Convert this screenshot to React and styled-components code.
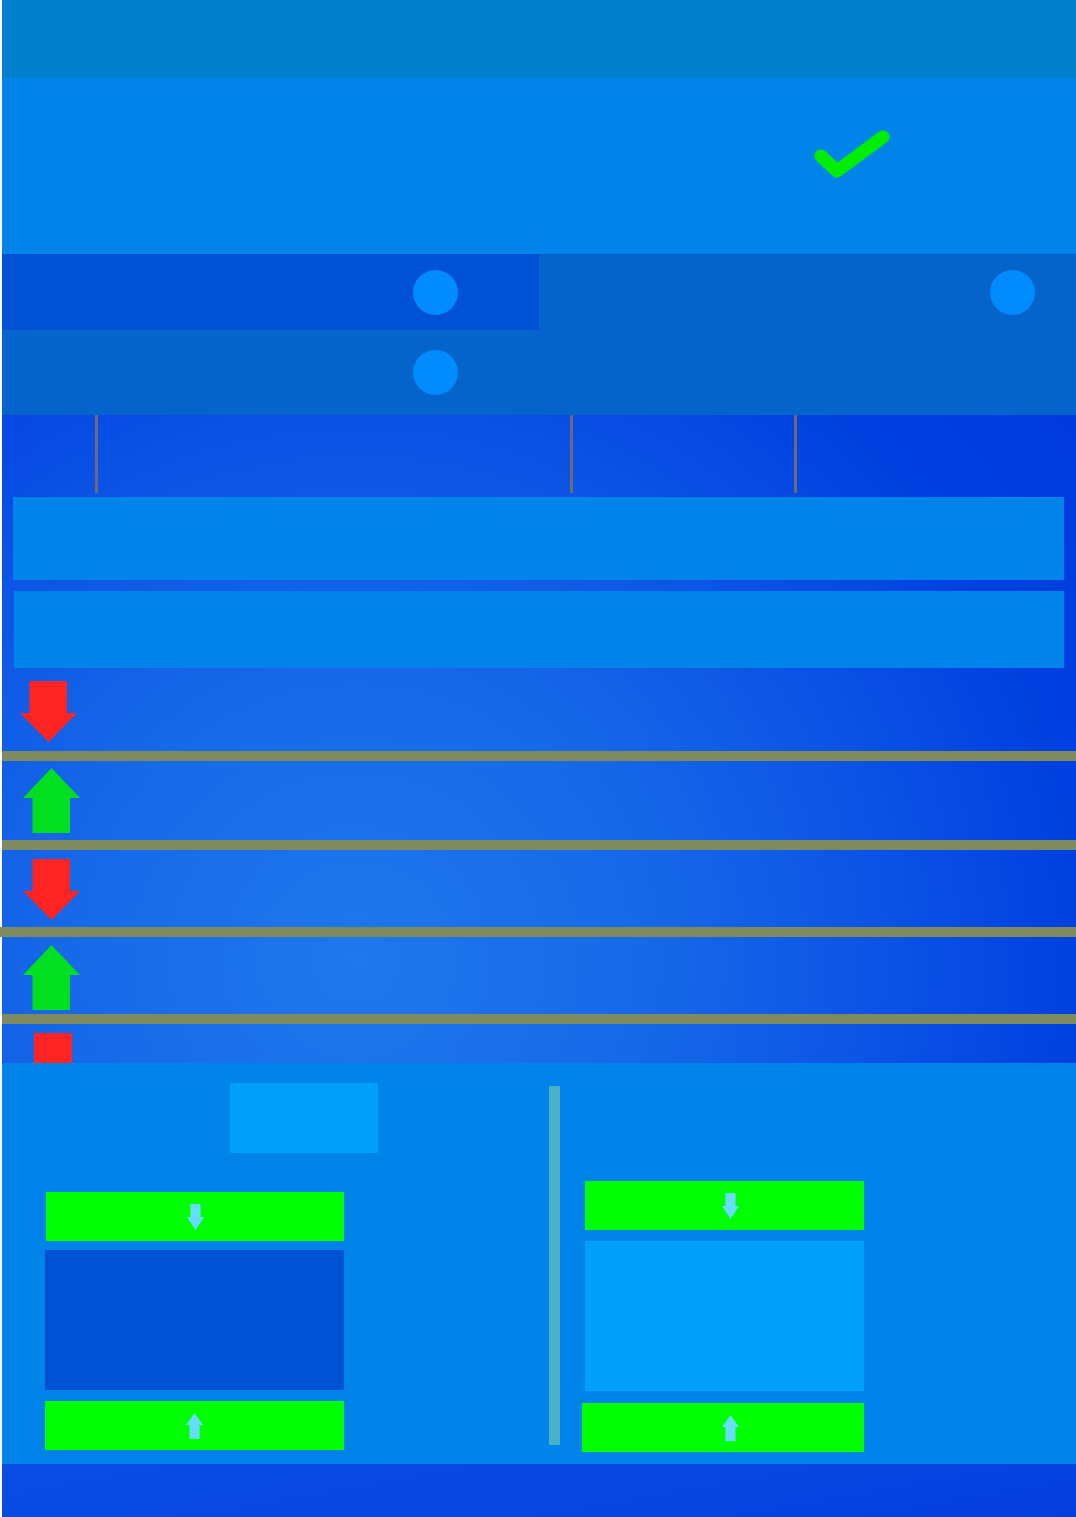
import React from 'react'
import styled, { createGlobalStyle } from 'styled-components'

const GlobalStyle = createGlobalStyle`
  html, body {
    margin: 0;
    padding: 0;
    background: #ffffff;
    font-family: 'Liberation Sans', Arial, sans-serif;
  }
`

const Page = styled.div`
  padding-left: 2px;
  display: flex;
  flex-direction: column;
`

const Header = styled.header`
  height: 78px;
  background: #0080cc;
`

const Hero = styled.section`
  height: 176px;
  background: #0084ea;
  display: flex;
  align-items: flex-start;
  padding-left: 809px;
  padding-top: 51px;
  box-sizing: border-box;
`

const Toggles = styled.section`
  display: grid;
  grid-template-columns: 537px 1fr;
  grid-template-rows: 76px 85px;
  background: #0563cc;
`

const ToggleCell = styled.div`
  background: ${p => (p.$active ? '#0052d4' : 'transparent')};
  display: flex;
  align-items: ${p => (p.$low ? 'flex-start' : 'center')};
  padding-top: ${p => (p.$low ? '20px' : '0')};
  padding-left: ${p => p.$knob}px;
  box-sizing: border-box;
`

const Knob = styled.span`
  width: 45px;
  height: 45px;
  border-radius: 50%;
  background: #008cff;
`

const Main = styled.main`
  background: radial-gradient(circle farthest-corner at 33% 84%, #1f78ec 0%, #1668e8 33%, #0a50e5 62%, #0040e0 80%, #003ade 100%);
  display: flex;
  flex-direction: column;
`

const Ticks = styled.div`
  height: 78px;
  position: relative;
  margin-bottom: 4px;
`

const Tick = styled.span`
  position: absolute;
  top: 0;
  bottom: 0;
  width: 3px;
  background: #6a6a78;
`

const Bar = styled.div`
  height: ${p => p.$h}px;
  margin: 0 12px ${p => p.$mb}px ${p => p.$ml}px;
  background: #0084ea;
`

const Row = styled.div`
  height: ${p => p.$h}px;
  display: flex;
  align-items: flex-start;
  padding-top: ${p => p.$pt}px;
  padding-left: ${p => p.$pl}px;
  box-sizing: border-box;
  border-bottom: ${p => (p.$last ? 'none' : '10px solid #7f8a60')};
  margin-left: ${p => (p.$bleed ? '-2px' : '0')};
  overflow: hidden;
`

const Stub = styled.span`
  width: 38px;
  height: 30px;
  background: #ff2424;
`

const Panel = styled.section`
  height: 401px;
  background: #0084ea;
  display: grid;
  grid-template-columns: 547px 1fr;
`

const LeftCol = styled.div`
  display: flex;
  flex-direction: column;
  padding-left: 43px;
`

const Chip = styled.div`
  width: 148px;
  height: 70px;
  margin: 20px 0 39px 185px;
  background: #00a0f8;
`

const Button = styled.div`
  width: ${p => p.$w}px;
  height: 49px;
  margin-left: ${p => p.$ml || 0}px;
  padding-left: ${p => p.$shift || 0}px;
  box-sizing: border-box;
  background: #00ff00;
  display: flex;
  align-items: center;
  justify-content: center;
`

const Screen = styled.div`
  width: ${p => p.$w}px;
  height: ${p => p.$h}px;
  margin: ${p => p.$m};
  background: ${p => (p.$dark ? '#0052d4' : '#00a0f8')};
`

const RightCol = styled.div`
  display: flex;
  padding-top: 23px;
`

const Rail = styled.div`
  width: 11px;
  height: 359px;
  background: #4ab0c8;
`

const Stack = styled.div`
  display: flex;
  flex-direction: column;
  padding-top: 95px;
  margin-left: 22px;
`

const Footer = styled.footer`
  height: 53px;
  background: linear-gradient(170deg, #0a4ce4 0%, #0846e2 60%, #033ede 100%);
`

const Check = () => (
  <svg width="80" height="56" viewBox="0 0 80 56">
    <path d="M10 27 L26 42 L72 8" fill="none" stroke="#00ee00" strokeWidth="13" strokeLinecap="round" strokeLinejoin="round" />
  </svg>
)

const BigArrow = ({ dir }) =>
  dir === 'down' ? (
    <svg width="58" height="62" viewBox="0 0 58 62">
      <path d="M9.5 0 H47 V32 H57 L28.5 61 L0 32 H9.5 Z" fill="#ff2424" />
    </svg>
  ) : (
    <svg width="58" height="65" viewBox="0 0 58 65">
      <path d="M28.5 0 L57 30 H47 V65 H9.5 V30 H0 Z" fill="#00e020" />
    </svg>
  )

const SmallArrow = ({ dir }) => (
  <svg width="17" height="26" viewBox="0 0 17 26">
    {dir === 'down' ? (
      <path d="M3.5 0 H13.5 V13 H17 L8.5 26 L0 13 H3.5 Z" fill="#66ddff" />
    ) : (
      <path d="M8.5 0 L17 12 H13.5 V26 H3.5 V12 H0 Z" fill="#66ddff" />
    )}
  </svg>
)

const rows = [
  { dir: 'down', h: 93, pt: 13, pl: 18 },
  { dir: 'up', h: 89, pt: 7, pl: 21 },
  { dir: 'down', h: 87, pt: 9, pl: 21, bleed: true },
  { dir: 'up', h: 87, pt: 8, pl: 21 },
]

export default function App() {
  return (
    <>
      <GlobalStyle />
      <Page>
        <Header />
        <Hero>
          <Check />
        </Hero>
        <Toggles>
          <ToggleCell $active $knob={411}><Knob /></ToggleCell>
          <ToggleCell $knob={451}><Knob /></ToggleCell>
          <ToggleCell $low $knob={411}><Knob /></ToggleCell>
          <ToggleCell />
        </Toggles>
        <Main>
          <Ticks>
            <Tick style={{ left: 93 }} />
            <Tick style={{ left: 568 }} />
            <Tick style={{ left: 792 }} />
          </Ticks>
          <Bar $h={83} $ml={11} $mb={11} />
          <Bar $h={77} $ml={12} $mb={0} />
          {rows.map((r, i) => (
            <Row key={i} $h={r.h} $pt={r.pt} $pl={r.bleed ? r.pl + 2 : r.pl} $bleed={r.bleed}>
              <BigArrow dir={r.dir} />
            </Row>
          ))}
          <Row $h={39} $pt={9} $pl={32} $last>
            <Stub />
          </Row>
        </Main>
        <Panel>
          <LeftCol>
            <Chip />
            <Button $w={298} $ml={1}><SmallArrow dir="down" /></Button>
            <Screen $dark $w={299} $h={140} $m="9px 0 11px 0" />
            <Button $w={299}><SmallArrow dir="up" /></Button>
          </LeftCol>
          <RightCol>
            <Rail />
            <Stack>
              <Button $w={279} $ml={3} $shift={12}><SmallArrow dir="down" /></Button>
              <Screen $w={279} $h={150} $m="11px 0 12px 3px" />
              <Button $w={282} $shift={15}><SmallArrow dir="up" /></Button>
            </Stack>
          </RightCol>
        </Panel>
        <Footer />
      </Page>
    </>
  )
}
